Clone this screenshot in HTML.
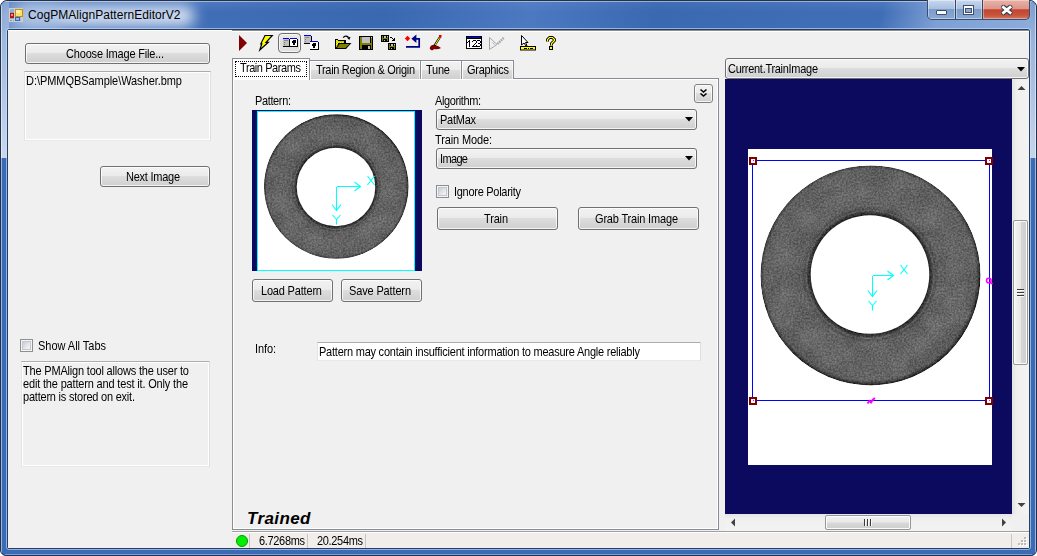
<!DOCTYPE html><html><head><meta charset="utf-8"><style>
*{box-sizing:border-box;margin:0;padding:0}
html,body{width:1037px;height:556px;overflow:hidden;background:#fff;font-family:"Liberation Sans", sans-serif}
.a{position:absolute}
.t{position:absolute;white-space:nowrap;line-height:20px;font-family:"Liberation Sans", sans-serif}
.btn{position:absolute;border:1px solid #707070;border-radius:3px;
 background:linear-gradient(#f2f2f2 0%,#ebebeb 45%,#dddddd 50%,#cfcfcf 100%);
 box-shadow:inset 0 0 0 1px rgba(255,255,255,.75)}
.tb{position:absolute;border:1px solid #abadb3;border-right-color:#dbdfe6;border-bottom-color:#e3e9ef;border-left-color:#e2e3ea;box-shadow:inset 0 0 0 1px #fff}
.chk{position:absolute;width:13px;height:13px;border:1px solid #8e8f8f;background:#f4f4f4}
.chk::after{content:"";position:absolute;left:1px;top:1px;width:9px;height:9px;box-sizing:border-box;border:1px solid #c4c8ce;background:linear-gradient(135deg,#c9cdd4,#e4e6ea 55%,#f7f7f7)}
.tab{position:absolute;border:1px solid #898c95;border-bottom:none;
 background:linear-gradient(#f2f2f2 0%,#ebebeb 50%,#dddddd 50%,#cfcfcf 100%);box-shadow:inset 1px 1px 0 #fff,inset -1px 0 0 rgba(255,255,255,.6)}
svg{position:absolute;overflow:visible}
</style></head><body><div class="a" style="left:0;top:0;width:1037px;height:556px;border-radius:7px 7px 6px 6px;background:#3b6bb7;border:1px solid #22324a;overflow:hidden"><div class="a" style="left:0;top:0;width:8px;height:157px;background:linear-gradient(#7d9dcf 0%,#9fb8df 25%,#cad8ee 100%)"></div><div class="a" style="left:1028px;top:0;width:8px;height:157px;background:linear-gradient(#7d9dcf 0%,#9ab4dc 25%,#c6d5ec 100%)"></div><div class="a" style="left:8px;top:0;width:1020px;height:29px;background:linear-gradient(#4f7bbf,#3f6db6 40%,#4270b8)"></div><div class="a" style="left:200px;top:0;width:700px;height:29px;background:linear-gradient(100deg,rgba(58,104,176,0) 0%,rgba(54,100,172,.6) 26%,rgba(90,135,205,.45) 47%,rgba(54,100,172,.55) 65%,rgba(60,106,178,.3) 85%,rgba(58,104,176,0) 100%)"></div><div class="a" style="left:14px;top:4px;width:180px;height:22px;border-radius:11px;background:#d2def1;filter:blur(7px)"></div><div class="a" style="left:0px;top:0px;width:60px;height:40px;background:#9fb8df;filter:blur(8px);opacity:.6"></div><div class="a" style="left:850px;top:0;width:180px;height:29px;background:linear-gradient(105deg,rgba(128,162,214,0) 18%,rgba(128,162,214,.95) 48%,rgba(140,172,220,1) 100%)"></div><div class="a" style="left:4px;top:0;width:1027px;height:1px;background:rgba(255,255,255,.45)"></div><div class="a" style="left:0;top:4px;width:1px;height:548px;background:rgba(255,255,255,.5)"></div><div class="a" style="left:1034px;top:4px;width:1px;height:548px;background:rgba(255,255,255,.5)"></div><div class="a" style="left:4px;top:553px;width:1027px;height:1px;background:rgba(255,255,255,.35)"></div></div><div class="a" style="left:7px;top:29px;width:1023px;height:520px;border:1px solid #253e63;border-radius:2px"></div><div class="a" style="left:6px;top:28px;width:1025px;height:522px;border:1px solid rgba(210,225,245,.6);border-radius:3px"></div><div class="a" style="left:8px;top:30px;width:1021px;height:518px;background:#f0f0f0"></div><div class="a" style="left:8px;top:30px;width:224px;height:1px;background:#fff"></div><div class="a" style="left:232px;top:30px;width:797px;height:1px;background:#8c8c8c"></div><div class="a" style="left:232px;top:31px;width:797px;height:1px;background:#fff"></div><svg style="left:8px;top:7px" width="16" height="16" viewBox="0 0 16 16" shape-rendering="crispEdges"><rect x="1.5" y="1.5" width="13" height="13" fill="none" stroke="#d3cdbf" stroke-width="1"/><path d="M6.5 1.5 V14.5 M1.5 12.5 H6.5 M4.5 12.5 V14.5 M13.5 9.5 V14.5" stroke="#d3cdbf" stroke-width="1"/><rect x="2" y="2" width="4" height="3" fill="#8eb0e0"/><rect x="7" y="2" width="8" height="8" fill="#c09010"/><rect x="8" y="3" width="6" height="6" fill="#ffe060"/><rect x="8" y="3" width="4" height="3" fill="#fff3b0"/><rect x="2" y="6" width="4" height="5" fill="#b01818"/><rect x="3" y="7" width="2" height="2" fill="#ff8080"/><rect x="7" y="10" width="5" height="4" fill="#2f66d0"/><rect x="8" y="11" width="3" height="2" fill="#90b8ff"/></svg><div class="t" style="left:28px;top:5px;font-size:12px;letter-spacing:0.045px;color:#000;">CogPMAlignPatternEditorV2</div><div class="a" style="left:927px;top:0;width:103px;height:20px;border:1px solid #3a4f6e;border-top:none;border-radius:0 0 5px 5px;overflow:hidden;background:#34465f"><div class="a" style="left:0;top:0;width:27px;height:19px;background:linear-gradient(#c8d8ee 0%,#a9c0e0 45%,#7d9dc9 50%,#8aa9d3 100%);box-shadow:inset 0 0 0 1px rgba(255,255,255,.4)"></div><div class="a" style="left:28px;top:0;width:26px;height:19px;background:linear-gradient(#c8d8ee 0%,#a9c0e0 45%,#7d9dc9 50%,#8aa9d3 100%);box-shadow:inset 0 0 0 1px rgba(255,255,255,.4)"></div><div class="a" style="left:55px;top:0;width:48px;height:19px;background:linear-gradient(#eab2a8 0%,#dc978b 45%,#c4432f 52%,#c8553d 80%,#d57a62 100%);box-shadow:inset 0 0 0 1px rgba(255,255,255,.35)"></div></div><div class="a" style="left:936px;top:10px;width:11px;height:5px;background:#fff;border:1px solid #3b4f6b;border-radius:1px"></div><div class="a" style="left:963px;top:5px;width:11px;height:10px;border:1px solid #3b4f6b;background:#fff"></div><div class="a" style="left:965px;top:8px;width:7px;height:5px;border:1px solid #3b4f6b;background:#8eaad4"></div><svg style="left:996px;top:2px" width="22" height="16" viewBox="996 2 22 16"><path d="M1003.4 7.2 L1010.1 12.8 M1010.1 7.2 L1003.4 12.8" stroke="#2f3848" stroke-width="4.8" stroke-linecap="round"/><path d="M1003.4 7.2 L1010.1 12.8 M1010.1 7.2 L1003.4 12.8" stroke="#fff" stroke-width="2.8" stroke-linecap="square"/></svg><div class="btn" style="left:25px;top:43px;width:185px;height:21px"></div><div class="t" style="left:66px;top:44px;font-size:11px;letter-spacing:-0.184px;color:#000;transform:scaleY(1.12);transform-origin:0 14px;">Choose Image File...</div><div class="tb" style="left:24px;top:71px;width:187px;height:70px;background:#f0f0f0"></div><div class="t" style="left:26px;top:71px;font-size:11px;letter-spacing:-0.055px;color:#000;transform:scaleY(1.12);transform-origin:0 14px;">D:\PMMQBSample\Washer.bmp</div><div class="btn" style="left:100px;top:166px;width:110px;height:21px"></div><div class="t" style="left:126px;top:167px;font-size:11px;letter-spacing:-0.250px;color:#000;transform:scaleY(1.12);transform-origin:0 14px;">Next Image</div><div class="chk" style="left:20px;top:339px"></div><div class="t" style="left:38px;top:336px;font-size:11px;letter-spacing:-0.025px;color:#000;transform:scaleY(1.12);transform-origin:0 14px;">Show All Tabs</div><div class="tb" style="left:21px;top:361px;width:189px;height:106px;background:#f0f0f0"></div><div class="t" style="left:23px;top:361px;font-size:11px;letter-spacing:-0.189px;color:#000;transform:scaleY(1.12);transform-origin:0 14px;">The PMAlign tool allows the user to</div><div class="t" style="left:23px;top:374px;font-size:11px;letter-spacing:-0.168px;color:#000;transform:scaleY(1.12);transform-origin:0 14px;">edit the pattern and test it. Only the</div><div class="t" style="left:23px;top:387px;font-size:11px;letter-spacing:-0.216px;color:#000;transform:scaleY(1.12);transform-origin:0 14px;">pattern is stored on exit.</div><svg style="left:238px;top:34px" width="10" height="18" viewBox="0 0 10 18"><polygon points="1,1 9,9 1,17" fill="#800000"/></svg><svg style="left:258px;top:34px" width="16" height="18" viewBox="258 34 16 18"><polygon points="265,35.5 272.3,35.5 266,42.3 268.3,42.3 259.8,50 261.8,43.8 260.8,43.8" fill="#ffff00" stroke="#000" stroke-width="1.2" stroke-linejoin="miter"/></svg><div class="a" style="left:278px;top:33px;width:23px;height:20px;border:1px solid #6f6f6f;border-radius:4px;background:linear-gradient(#ececec,#dcdcdc 50%,#e2e2e2);box-shadow:inset 0 0 0 1px #f6f6f6"></div><svg style="left:276px;top:31px" width="30" height="24" viewBox="276 31 30 24" shape-rendering="crispEdges"><rect x="283" y="38" width="6" height="8" fill="#c0c0c0"/><rect x="283" y="38" width="6" height="1" fill="#0000e0"/><rect x="289" y="39" width="1" height="8" fill="#000"/><rect x="283" y="46" width="6" height="1" fill="#000"/><rect x="284" y="40" width="4" height="1" fill="#8a8a8a"/><rect x="284" y="42" width="1" height="1" fill="#808080"/><rect x="284" y="44" width="1" height="1" fill="#808080"/><rect x="290" y="38" width="7" height="8" fill="#fff"/><rect x="290" y="38" width="7" height="1" fill="#0000e0"/><rect x="297" y="39" width="1" height="8" fill="#000"/><rect x="290" y="46" width="7" height="1" fill="#000"/><rect x="292" y="40" width="4" height="3" fill="#000"/><rect x="292" y="40" width="1" height="1" fill="#fff"/><rect x="293" y="43" width="2" height="2" fill="#000"/></svg><svg style="left:302px;top:33px" width="20" height="20" viewBox="302 33 20 20" shape-rendering="crispEdges"><rect x="304" y="35" width="7" height="8" fill="#c0c0c0"/><rect x="304" y="35" width="7" height="1" fill="#0000e0"/><rect x="311" y="36" width="1" height="8" fill="#000"/><rect x="304" y="43" width="7" height="1" fill="#000"/><rect x="305" y="37" width="4" height="1" fill="#8a8a8a"/><rect x="305" y="39" width="1" height="1" fill="#808080"/><rect x="305" y="41" width="1" height="1" fill="#808080"/><rect x="310" y="41" width="8" height="8" fill="#fff"/><rect x="310" y="41" width="8" height="1" fill="#0000e0"/><rect x="318" y="42" width="1" height="8" fill="#000"/><rect x="310" y="49" width="8" height="1" fill="#000"/><rect x="312" y="43" width="4" height="3" fill="#000"/><rect x="312" y="43" width="1" height="1" fill="#fff"/><rect x="313" y="46" width="2" height="2" fill="#000"/></svg><svg style="left:334px;top:34px" width="19" height="17" viewBox="334 34 19 17" shape-rendering="crispEdges"><rect x="335" y="39" width="3" height="1" fill="#000"/><rect x="335" y="40" width="11" height="9" fill="#000"/><rect x="336" y="40" width="2" height="8" fill="#c8c800"/><rect x="338" y="41" width="6" height="2" fill="#c8c800"/><rect x="336" y="40" width="1" height="1" fill="#ffff00"/><rect x="337" y="41" width="1" height="1" fill="#ffff00"/><rect x="336" y="42" width="1" height="1" fill="#ffff00"/><rect x="338" y="42" width="1" height="1" fill="#ffff00"/><rect x="337" y="43" width="1" height="1" fill="#ffff00"/><rect x="336" y="44" width="1" height="1" fill="#ffff00"/><rect x="336" y="46" width="1" height="1" fill="#ffff00"/><rect x="340" y="42" width="1" height="1" fill="#ffff00"/><rect x="342" y="42" width="1" height="1" fill="#ffff00"/><polygon points="339,43 351.5,43 346,49 335,49" fill="#000" shape-rendering="auto"/><polygon points="339.6,44 349.6,44 345.4,48 337,48" fill="#808000" shape-rendering="auto"/></svg><svg style="left:340px;top:34px" width="12" height="8" viewBox="340 34 12 8"><path d="M343.2 37.6 Q345.5 34.8 348.6 37.4" fill="none" stroke="#000" stroke-width="1.3"/><polygon points="347,37.5 350.5,37 349.3,40" fill="#000"/></svg><svg style="left:358px;top:35px" width="16" height="16" viewBox="358 35 16 16" shape-rendering="crispEdges"><rect x="359" y="36" width="14" height="14" fill="#000"/><rect x="360" y="37" width="2" height="12" fill="#808000"/><rect x="371" y="38" width="1" height="11" fill="#808000"/><rect x="362" y="43" width="9" height="2" fill="#808000"/><rect x="362" y="37" width="8" height="6" fill="#c0c0c0"/><rect x="368" y="46" width="2" height="3" fill="#c0c0c0"/><rect x="371" y="37" width="1" height="1" fill="#e0e0e0"/></svg><svg style="left:380px;top:34px" width="18" height="17" viewBox="380 34 18 17" shape-rendering="crispEdges"><rect x="381" y="35" width="8" height="7" fill="#000"/><rect x="382" y="36" width="1" height="5" fill="#808000"/><rect x="387" y="37" width="1" height="4" fill="#808000"/><rect x="383" y="38" width="4" height="1" fill="#808000"/><rect x="384" y="36" width="2" height="2" fill="#c0c0c0"/><rect x="384" y="40" width="1" height="1" fill="#c0c0c0"/><rect x="387" y="36" width="1" height="1" fill="#d0d0d0"/><rect x="388" y="43" width="8" height="7" fill="#000"/><rect x="389" y="44" width="1" height="5" fill="#808000"/><rect x="394" y="45" width="1" height="4" fill="#808000"/><rect x="390" y="46" width="4" height="1" fill="#808000"/><rect x="391" y="44" width="2" height="2" fill="#c0c0c0"/><rect x="391" y="48" width="1" height="1" fill="#c0c0c0"/><rect x="394" y="44" width="1" height="1" fill="#d0d0d0"/><rect x="390" y="37" width="2" height="1" fill="#000"/><rect x="392" y="38" width="1" height="1" fill="#000"/><rect x="393" y="39" width="1" height="1" fill="#000"/><rect x="394" y="38" width="1" height="3" fill="#000"/><rect x="392" y="40" width="2" height="1" fill="#000"/></svg><svg style="left:404px;top:34px" width="17" height="15" viewBox="404 34 17 15"><polygon points="407.5,35.8 410.2,38.5 407.5,41.2 404.8,38.5" fill="#ff0000"/><path d="M406 46.8 H419.2 V38.8 H415" fill="none" stroke="#000080" stroke-width="1.7"/><polygon points="411.4,38.8 416.4,34.6 416.4,43" fill="#000080"/></svg><svg style="left:428px;top:34px" width="15" height="18" viewBox="428 34 15 18"><path d="M430 47 Q432 44 435 45 Q439 46 441 48 Q438 50 434 49 Q433 51 431 50 Q429 49 430 47Z" fill="#800000"/><path d="M434.5 45.5 L440 37" stroke="#000" stroke-width="2.2"/><path d="M435 45 L439.8 37.3" stroke="#ffff00" stroke-width="1"/><rect x="439" y="35" width="2.5" height="2.5" fill="#e00000"/></svg><svg style="left:465px;top:35px" width="18" height="16" viewBox="465 35 18 16" shape-rendering="crispEdges"><rect x="466" y="36" width="16" height="13" fill="#000"/><rect x="467" y="39" width="14" height="9" fill="#fff"/><rect x="467" y="37" width="14" height="1" fill="#0000ff"/><rect x="469" y="40" width="1" height="7" fill="#000"/><rect x="468" y="41" width="1" height="1" fill="#000"/><rect x="467" y="42" width="1" height="1" fill="#000"/><rect x="473" y="40" width="3" height="1" fill="#000"/><rect x="472" y="41" width="1" height="1" fill="#000"/><rect x="476" y="41" width="1" height="2" fill="#000"/><rect x="475" y="43" width="1" height="1" fill="#000"/><rect x="474" y="44" width="1" height="1" fill="#000"/><rect x="473" y="45" width="1" height="1" fill="#000"/><rect x="472" y="46" width="5" height="1" fill="#000"/><rect x="477" y="40" width="3" height="1" fill="#000"/><rect x="480" y="41" width="1" height="2" fill="#000"/><rect x="478" y="43" width="2" height="1" fill="#000"/><rect x="480" y="44" width="1" height="2" fill="#000"/><rect x="477" y="46" width="3" height="1" fill="#000"/><rect x="476" y="45" width="1" height="1" fill="#000"/><rect x="476" y="41" width="1" height="1" fill="#000"/></svg><svg style="left:488px;top:35px" width="18" height="16" viewBox="488 35 18 16"><path d="M489.5 37.5 V49.5 L497 44.5 M489.5 37.5 L497 44.5" fill="none" stroke="#a6a6a6" stroke-width="1"/><path d="M492.5 42.5 L494.5 44.5" stroke="#a6a6a6" stroke-width="1"/><path d="M497.5 44 L504 37.5" stroke="#a6a6a6" stroke-width="2.4" stroke-dasharray="1.6 0.8"/></svg><svg style="left:519px;top:34px" width="18" height="18" viewBox="519 34 18 18"><polygon points="521.5,35.5 521.5,45 524,43 526,46 527,45.5 525.5,42.5 528,42.5" fill="#fff" stroke="#000" stroke-width="1"/><rect x="520" y="46" width="16" height="4.5" fill="#000"/><rect x="521" y="47" width="14" height="2.5" fill="#ffff00"/><rect x="524" y="48" width="3" height="1" fill="#000"/><rect x="528" y="48" width="1" height="1" fill="#000"/><rect x="530" y="48" width="3" height="1" fill="#000"/></svg><svg style="left:545px;top:35px" width="12" height="16" viewBox="545 35 12 16" shape-rendering="crispEdges"><path d="M547.5 41.5 V39.5 L549.5 37.5 H552.5 L554.5 39.5 V40.5 L551.5 43.5 V45.5" fill="none" stroke="#000" stroke-width="3" stroke-linejoin="round" shape-rendering="auto"/><path d="M547.5 41.5 V39.5 L549.5 37.5 H552.5 L554.5 39.5 V40.5 L551.5 43.5 V45.5" fill="none" stroke="#ffff00" stroke-width="1.2" shape-rendering="auto"/><rect x="549" y="46" width="4" height="4" fill="#000"/><rect x="550" y="47" width="2" height="2" fill="#ffff00"/></svg><div class="a" style="left:232px;top:78px;width:487px;height:452px;border:1px solid #898c95;background:#f0f0f0;box-shadow:inset 0 0 0 1px #fff"></div><div class="tab" style="left:309px;top:60px;width:112px;height:19px"></div><div class="tab" style="left:420px;top:60px;width:42px;height:19px"></div><div class="tab" style="left:461px;top:60px;width:53px;height:19px"></div><div class="a" style="left:232px;top:58px;width:78px;height:22px;border:1px solid #898c95;border-bottom:none;background:#fff"></div><div class="a" style="left:235px;top:61px;width:72px;height:16px;border:1px dotted #000"></div><div class="t" style="left:240px;top:58px;font-size:11px;letter-spacing:-0.419px;color:#000;transform:scaleY(1.12);transform-origin:0 14px;">Train Params</div><div class="t" style="left:316px;top:60px;font-size:11px;letter-spacing:-0.318px;color:#000;transform:scaleY(1.12);transform-origin:0 14px;">Train Region &amp; Origin</div><div class="t" style="left:426px;top:60px;font-size:11px;letter-spacing:-0.224px;color:#000;transform:scaleY(1.12);transform-origin:0 14px;">Tune</div><div class="t" style="left:467px;top:60px;font-size:11px;letter-spacing:-0.290px;color:#000;transform:scaleY(1.12);transform-origin:0 14px;">Graphics</div><div class="t" style="left:255px;top:91px;font-size:11px;letter-spacing:-0.362px;color:#000;transform:scaleY(1.12);transform-origin:0 14px;">Pattern:</div><div class="a" style="left:252px;top:110px;width:170px;height:161px;background:#0b0a5e"></div><div class="a" style="left:257px;top:111px;width:158px;height:160px;border:1px solid #00ffff;background:#fff;overflow:hidden"><svg style="left:0;top:0" width="400" height="400"><defs><filter id="n1" x="0" y="0" width="100%" height="100%" color-interpolation-filters="sRGB"><feTurbulence type="fractalNoise" baseFrequency="0.55" numOctaves="2" seed="4" result="t1"/><feColorMatrix in="t1" values="2 0 0 0 -0.5  2 0 0 0 -0.5  2 0 0 0 -0.5  0 0 0 0 1" result="n1"/><feTurbulence type="fractalNoise" baseFrequency="0.05" numOctaves="2" seed="10" result="t2"/><feColorMatrix in="t2" values="2.5 0 0 0 -0.75  2.5 0 0 0 -0.75  2.5 0 0 0 -0.75  0 0 0 0 1" result="n2"/><feComposite in="n1" in2="n2" operator="arithmetic" k1="0" k2="0.75" k3="0.25" k4="0" result="t"/><feComposite in="SourceGraphic" in2="t" operator="arithmetic" k1="0" k2="1" k3="0.2" k4="-0.1" result="c"/><feComposite in="c" in2="SourceGraphic" operator="in"/></filter><radialGradient id="g1" gradientUnits="userSpaceOnUse" cx="78" cy="75" r="72.3"><stop offset="0.5436" stop-color="#202020"/><stop offset="0.5545" stop-color="#2e2e2e"/><stop offset="0.5727" stop-color="#434343"/><stop offset="0.5854" stop-color="#626262"/><stop offset="0.5981" stop-color="#4e4e4e"/><stop offset="0.6254" stop-color="#616161"/><stop offset="0.7718" stop-color="#676767"/><stop offset="0.9636" stop-color="#5f5f5f"/><stop offset="0.9864" stop-color="#404040"/><stop offset="1.0000" stop-color="#222222"/></radialGradient><mask id="m1"><rect width="400" height="400" fill="#fff"/><circle cx="78" cy="75" r="39.3" fill="#000"/></mask></defs><g mask="url(#m1)"><circle cx="78.30000000000001" cy="74.5" r="72.3" fill="url(#g1)" filter="url(#n1)"/></g><g stroke="#00ffff" stroke-width="1.1" fill="none" shape-rendering="crispEdges"><path d="M78.5 74.5 H102.5"/><path d="M78.5 74.5 V98.5"/></g><g stroke="#00ffff" stroke-width="1.1" fill="none"><path d="M96.5 70.0 L102.5 74.5 L96.5 79.0"/><path d="M74.0 92.5 L78.5 98.5 L83.0 92.5"/><path d="M109.5 64 l7 9 M116.5 64 l-7 9"/><path d="M74.5 103 l4 4.5 l4 -4.5 M78.5 107.5 v5"/></g></svg></div><div class="btn" style="left:252px;top:279px;width:81px;height:23px"></div><div class="t" style="left:261px;top:281px;font-size:11px;letter-spacing:-0.182px;color:#000;transform:scaleY(1.12);transform-origin:0 14px;">Load Pattern</div><div class="btn" style="left:341px;top:279px;width:81px;height:23px"></div><div class="t" style="left:349px;top:281px;font-size:11px;letter-spacing:-0.145px;color:#000;transform:scaleY(1.12);transform-origin:0 14px;">Save Pattern</div><div class="btn" style="left:694px;top:84px;width:19px;height:19px;border-color:#808080"></div><svg style="left:699px;top:88px" width="9" height="10" viewBox="0 0 9 10"><path d="M1.5 1.5 L4.5 4 L7.5 1.5 M1.5 5.5 L4.5 8 L7.5 5.5" fill="none" stroke="#000" stroke-width="1.6"/></svg><div class="t" style="left:435px;top:91px;font-size:11px;letter-spacing:-0.392px;color:#000;transform:scaleY(1.12);transform-origin:0 14px;">Algorithm:</div><div class="btn" style="left:436px;top:109px;width:261px;height:21px"></div><div class="t" style="left:440px;top:110px;font-size:11px;letter-spacing:-0.259px;color:#000;transform:scaleY(1.12);transform-origin:0 14px;">PatMax</div><svg style="left:685px;top:117px" width="9" height="5" viewBox="0 0 9 5"><polygon points="0,0 8,0 4,4.5" fill="#000"/></svg><div class="t" style="left:435px;top:130px;font-size:11px;letter-spacing:-0.130px;color:#000;transform:scaleY(1.12);transform-origin:0 14px;">Train Mode:</div><div class="btn" style="left:436px;top:148px;width:261px;height:21px"></div><div class="t" style="left:440px;top:149px;font-size:11px;letter-spacing:-0.645px;color:#000;transform:scaleY(1.12);transform-origin:0 14px;">Image</div><svg style="left:685px;top:156px" width="9" height="5" viewBox="0 0 9 5"><polygon points="0,0 8,0 4,4.5" fill="#000"/></svg><div class="chk" style="left:436px;top:185px"></div><div class="t" style="left:454px;top:182px;font-size:11px;letter-spacing:-0.281px;color:#000;transform:scaleY(1.12);transform-origin:0 14px;">Ignore Polarity</div><div class="btn" style="left:437px;top:207px;width:121px;height:23px"></div><div class="t" style="left:484px;top:209px;font-size:11px;letter-spacing:-0.164px;color:#000;transform:scaleY(1.12);transform-origin:0 14px;">Train</div><div class="btn" style="left:578px;top:207px;width:121px;height:23px"></div><div class="t" style="left:595px;top:209px;font-size:11px;letter-spacing:-0.173px;color:#000;transform:scaleY(1.12);transform-origin:0 14px;">Grab Train Image</div><div class="t" style="left:255px;top:339px;font-size:11px;letter-spacing:-0.102px;color:#000;transform:scaleY(1.12);transform-origin:0 14px;">Info:</div><div class="tb" style="left:317px;top:342px;width:384px;height:19px;background:#fff"></div><div class="t" style="left:319px;top:342px;font-size:11px;letter-spacing:-0.228px;color:#000;transform:scaleY(1.12);transform-origin:0 14px;">Pattern may contain insufficient information to measure Angle reliably</div><div class="t" style="left:247px;top:509px;font-size:17px;letter-spacing:0.401px;color:#000;font-weight:bold;font-style:italic">Trained</div><div class="a" style="left:232px;top:531px;width:797px;height:17px;background:#f0edeb;border-top:1px solid #a0a0a0;box-shadow:inset 0 1px 0 #fff"></div><div class="a" style="left:236px;top:535px;width:12px;height:12px;border-radius:50%;background:#00f000;border:1px solid #009a00"></div><div class="a" style="left:249px;top:534px;width:1px;height:14px;background:#c8c5c2"></div><div class="a" style="left:307px;top:534px;width:1px;height:14px;background:#c8c5c2"></div><div class="a" style="left:365px;top:534px;width:1px;height:14px;background:#c8c5c2"></div><div class="a" style="left:1011px;top:534px;width:1px;height:14px;background:#c8c5c2"></div><div class="t" style="left:259px;top:531px;font-size:11px;letter-spacing:-0.330px;color:#000;transform:scaleY(1.12);transform-origin:0 14px;">6.7268ms</div><div class="t" style="left:317px;top:531px;font-size:11px;letter-spacing:-0.330px;color:#000;transform:scaleY(1.12);transform-origin:0 14px;">20.254ms</div><div class="a" style="left:1024px;top:537px;width:2px;height:2px;background:#bdb9b5;box-shadow:1px 1px 0 #fff"></div><div class="a" style="left:1021px;top:540px;width:2px;height:2px;background:#bdb9b5;box-shadow:1px 1px 0 #fff"></div><div class="a" style="left:1024px;top:540px;width:2px;height:2px;background:#bdb9b5;box-shadow:1px 1px 0 #fff"></div><div class="a" style="left:1018px;top:543px;width:2px;height:2px;background:#bdb9b5;box-shadow:1px 1px 0 #fff"></div><div class="a" style="left:1021px;top:543px;width:2px;height:2px;background:#bdb9b5;box-shadow:1px 1px 0 #fff"></div><div class="a" style="left:1024px;top:543px;width:2px;height:2px;background:#bdb9b5;box-shadow:1px 1px 0 #fff"></div><div class="btn" style="left:725px;top:58px;width:304px;height:21px"></div><div class="t" style="left:728px;top:59px;font-size:11px;letter-spacing:-0.292px;color:#000;transform:scaleY(1.12);transform-origin:0 14px;">Current.TrainImage</div><svg style="left:1017px;top:67px" width="9" height="5" viewBox="0 0 9 5"><polygon points="0,0 8,0 4,4.5" fill="#000"/></svg><div class="a" style="left:725px;top:79px;width:287px;height:435px;background:#0b0a5e"></div><div class="a" style="left:748px;top:149px;width:244px;height:316px;background:#fff;overflow:hidden"><svg style="left:0;top:0" width="400" height="400"><defs><filter id="n2" x="0" y="0" width="100%" height="100%" color-interpolation-filters="sRGB"><feTurbulence type="fractalNoise" baseFrequency="0.55" numOctaves="2" seed="5" result="t1"/><feColorMatrix in="t1" values="2 0 0 0 -0.5  2 0 0 0 -0.5  2 0 0 0 -0.5  0 0 0 0 1" result="n1"/><feTurbulence type="fractalNoise" baseFrequency="0.05" numOctaves="2" seed="11" result="t2"/><feColorMatrix in="t2" values="2.5 0 0 0 -0.75  2.5 0 0 0 -0.75  2.5 0 0 0 -0.75  0 0 0 0 1" result="n2"/><feComposite in="n1" in2="n2" operator="arithmetic" k1="0" k2="0.75" k3="0.25" k4="0" result="t"/><feComposite in="SourceGraphic" in2="t" operator="arithmetic" k1="0" k2="1" k3="0.2" k4="-0.1" result="c"/><feComposite in="c" in2="SourceGraphic" operator="in"/></filter><radialGradient id="g2" gradientUnits="userSpaceOnUse" cx="122" cy="125.5" r="110"><stop offset="0.5391" stop-color="#202020"/><stop offset="0.5500" stop-color="#2e2e2e"/><stop offset="0.5682" stop-color="#434343"/><stop offset="0.5809" stop-color="#626262"/><stop offset="0.5936" stop-color="#4e4e4e"/><stop offset="0.6209" stop-color="#616161"/><stop offset="0.7695" stop-color="#676767"/><stop offset="0.9636" stop-color="#5f5f5f"/><stop offset="0.9864" stop-color="#404040"/><stop offset="1.0000" stop-color="#222222"/></radialGradient><mask id="m2"><rect width="400" height="400" fill="#fff"/><circle cx="122" cy="125.5" r="59.3" fill="#000"/></mask></defs><g mask="url(#m2)"><circle cx="122.5" cy="126.39999999999998" r="110" fill="url(#g2)" filter="url(#n2)"/></g><g stroke="#00ffff" stroke-width="1.1" fill="none" shape-rendering="crispEdges"><path d="M124.5 126.5 H145.5"/><path d="M124.5 126.5 V147.5"/></g><g stroke="#00ffff" stroke-width="1.1" fill="none"><path d="M139.5 122.0 L145.5 126.5 L139.5 131.0"/><path d="M120.0 141.5 L124.5 147.5 L129.0 141.5"/><path d="M152.5 116 l7 9 M159.5 116 l-7 9"/><path d="M120.5 152 l4 4.5 l4 -4.5 M124.5 156.5 v5"/></g></svg></div><div class="a" style="left:1012px;top:79px;width:17px;height:435px;background:linear-gradient(90deg,#e3e3e3,#f0f0f0 30%,#f3f3f3)"></div><svg style="left:1017px;top:85px" width="9" height="6" viewBox="0 0 9 6"><polygon points="0.5,5 4.5,1 8.5,5" fill="#404040"/></svg><svg style="left:1017px;top:502px" width="9" height="6" viewBox="0 0 9 6"><polygon points="0.5,1 4.5,5 8.5,1" fill="#404040"/></svg><div class="a" style="left:1013px;top:220px;width:15px;height:145px;border:1px solid #979797;border-radius:2px;background:linear-gradient(90deg,#f4f4f4,#e8e8e8 50%,#d6d6d6 51%,#cfcfcf);box-shadow:inset 0 0 0 1px #fbfbfb"></div><div class="a" style="left:1017px;top:289px;width:7px;height:2px;background:linear-gradient(#3a3a3a 50%,#fafafa 50%)"></div><div class="a" style="left:1017px;top:292px;width:7px;height:2px;background:linear-gradient(#3a3a3a 50%,#fafafa 50%)"></div><div class="a" style="left:1017px;top:295px;width:7px;height:2px;background:linear-gradient(#3a3a3a 50%,#fafafa 50%)"></div><div class="a" style="left:725px;top:514px;width:287px;height:17px;background:linear-gradient(#e3e3e3,#f0f0f0 30%,#f3f3f3)"></div><div class="a" style="left:1012px;top:514px;width:17px;height:17px;background:#f0f0f0"></div><svg style="left:730px;top:518px" width="6" height="9" viewBox="0 0 6 9"><polygon points="5,0.5 1,4.5 5,8.5" fill="#404040"/></svg><svg style="left:1001px;top:518px" width="6" height="9" viewBox="0 0 6 9"><polygon points="1,0.5 5,4.5 1,8.5" fill="#404040"/></svg><div class="a" style="left:825px;top:515px;width:86px;height:15px;border:1px solid #979797;border-radius:2px;background:linear-gradient(#f3f3f3,#e9e9e9 45%,#d9d9d9 55%,#cdcdcd);box-shadow:inset 0 0 0 1px #fbfbfb"></div><div class="a" style="left:864px;top:519px;width:2px;height:7px;background:linear-gradient(90deg,#3a3a3a 50%,#fafafa 50%)"></div><div class="a" style="left:867px;top:519px;width:2px;height:7px;background:linear-gradient(90deg,#3a3a3a 50%,#fafafa 50%)"></div><div class="a" style="left:870px;top:519px;width:2px;height:7px;background:linear-gradient(90deg,#3a3a3a 50%,#fafafa 50%)"></div><svg style="left:0;top:0" width="1037" height="556" shape-rendering="crispEdges"><rect x="752.5" y="160.5" width="237" height="240" fill="none" stroke="#0000ff" stroke-width="1"/><rect x="749" y="157" width="8" height="8" fill="#800000"/><rect x="751" y="159" width="4" height="4" fill="#fff"/><rect x="753" y="160" width="1" height="1" fill="#ff00ff"/><rect x="985" y="157" width="8" height="8" fill="#800000"/><rect x="987" y="159" width="4" height="4" fill="#fff"/><rect x="989" y="160" width="1" height="1" fill="#ff00ff"/><rect x="749" y="397" width="8" height="8" fill="#800000"/><rect x="751" y="399" width="4" height="4" fill="#fff"/><rect x="753" y="400" width="1" height="1" fill="#ff00ff"/><rect x="985" y="397" width="8" height="8" fill="#800000"/><rect x="987" y="399" width="4" height="4" fill="#fff"/><rect x="989" y="400" width="1" height="1" fill="#ff00ff"/><g fill="none" stroke="#ff00ff" stroke-width="1.2" shape-rendering="auto"><circle cx="988.8" cy="280.5" r="2.3" stroke-width="1.6"/><path d="M990.5 282.5 l2 1.5" stroke-width="1.6"/><path d="M867.5 403.5 L869.5 401 L871 402.5 L872.8 399.8 L875 398" stroke-width="2"/></g></svg></body></html>
